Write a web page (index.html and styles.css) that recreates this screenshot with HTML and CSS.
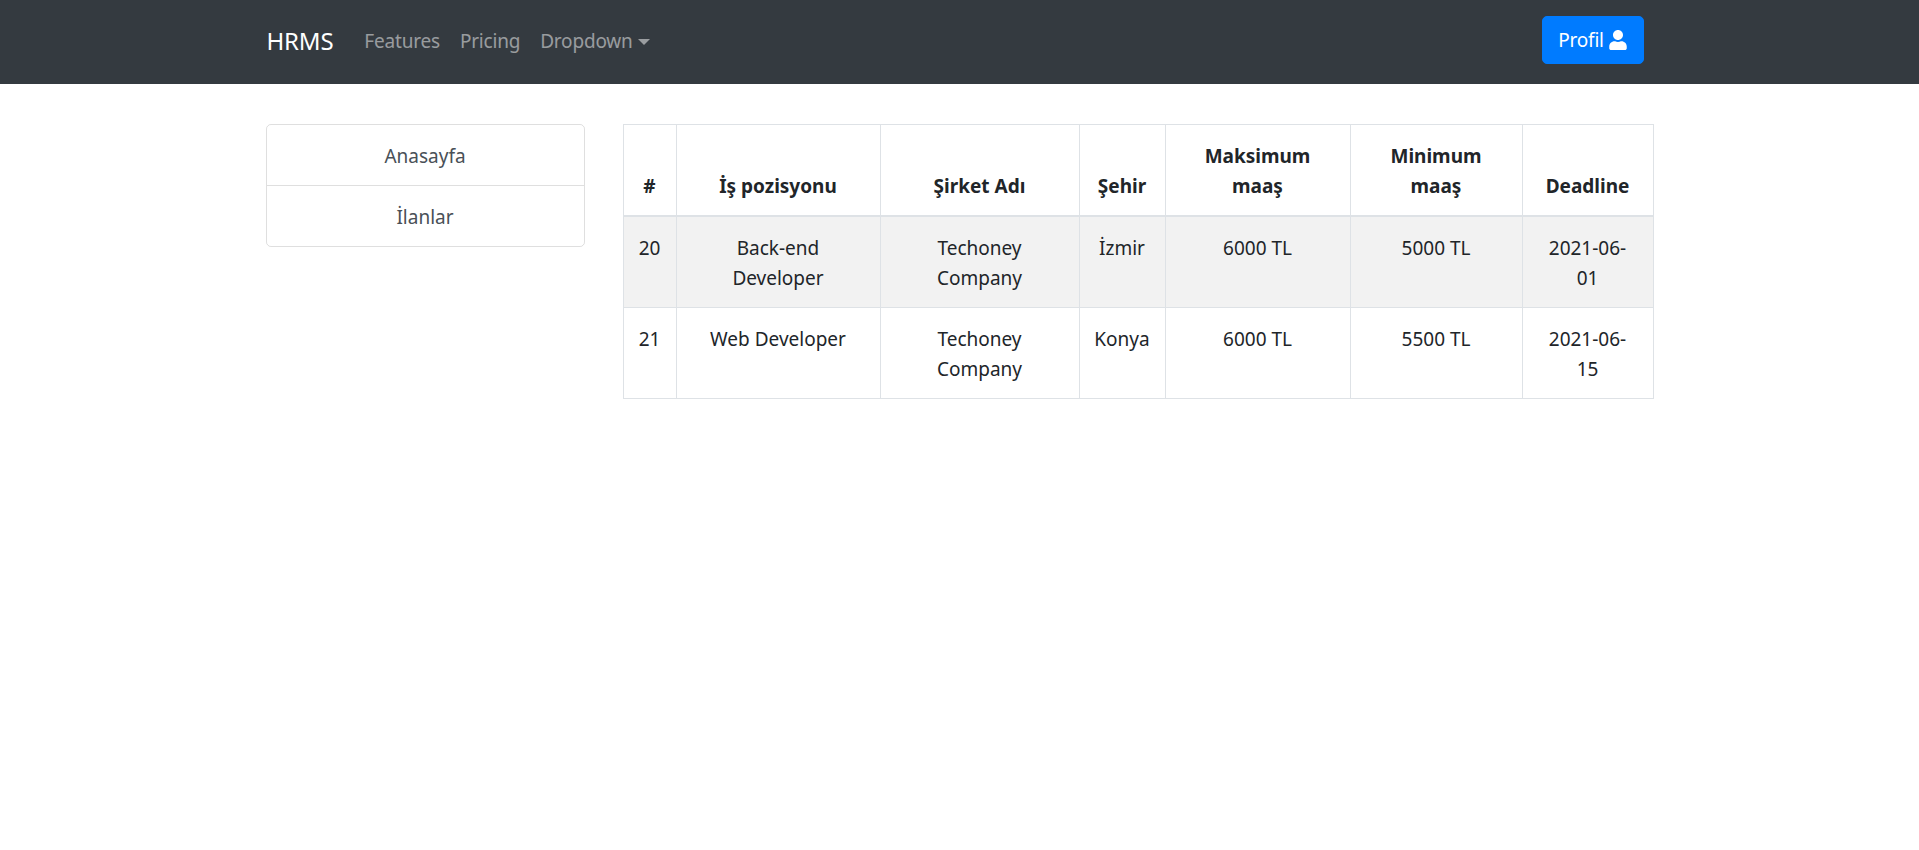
FILE: index.html
```html
<!DOCTYPE html>
<html lang="tr">
<head>
<meta charset="utf-8">
<title>HRMS</title>
<link rel="stylesheet" href="styles.css">
</head>
<body>
<nav class="navbar">
  <div class="nav-inner">
    <a class="brand" href="#">HRMS</a>
    <ul class="nav-links">
      <li><a class="nav-link" href="#">Features</a></li>
      <li><a class="nav-link" href="#">Pricing</a></li>
      <li><a class="nav-link" href="#">Dropdown<span class="caret"></span></a></li>
    </ul>
    <button class="profile-btn" type="button">Profil
      <svg class="user-icon" viewBox="0 0 448 512" aria-hidden="true"><path fill="currentColor" d="M224 256c70.7 0 128-57.3 128-128S294.7 0 224 0 96 57.3 96 128s57.3 128 128 128zm89.6 32h-16.7c-22.2 10.2-46.9 16-72.9 16s-50.6-5.8-72.9-16h-16.7C60.2 288 0 348.2 0 422.4V464c0 26.5 21.5 48 48 48h352c26.5 0 48-21.5 48-48v-41.6c0-74.2-60.2-134.4-134.4-134.4z"/></svg>
    </button>
  </div>
</nav>
<main class="content">
  <aside class="side-menu">
    <a class="side-item" href="#">Anasayfa</a>
    <a class="side-item" href="#">İlanlar</a>
  </aside>
  <table class="jobs">
    <colgroup>
      <col class="c-id"><col class="c-pos"><col class="c-co"><col class="c-city"><col class="c-max"><col class="c-min"><col class="c-date">
    </colgroup>
    <thead>
      <tr>
        <th>#</th><th>İş pozisyonu</th><th>Şirket Adı</th><th>Şehir</th><th>Maksimum<br>maaş</th><th>Minimum<br>maaş</th><th>Deadline</th>
      </tr>
    </thead>
    <tbody>
      <tr class="striped">
        <td>20</td><td>Back-end<br>Developer</td><td>Techoney<br>Company</td><td>İzmir</td><td>6000 TL</td><td>5000 TL</td><td>2021-06-<br>01</td>
      </tr>
      <tr>
        <td>21</td><td>Web Developer</td><td>Techoney<br>Company</td><td>Konya</td><td>6000 TL</td><td>5500 TL</td><td>2021-06-<br>15</td>
      </tr>
    </tbody>
  </table>
</main>
</body>
</html>
```
FILE: styles.css
```css
* { box-sizing: border-box; }
html, body { margin: 0; padding: 0; }
body {
  font-family: "Noto Sans", "Open Sans", sans-serif;
  font-size: 19px;
  line-height: 30px;
  color: #212529;
  background: #fff;
}
a { text-decoration: none; }

.navbar {
  background: #343a40;
  height: 84px;
  display: flex;
  justify-content: center;
}
.nav-inner {
  width: 1388px;
  padding-bottom: 2px;
  display: flex;
  align-items: center;
}
.brand {
  color: #fff;
  font-size: 24px;
  margin-left: 1px;
  margin-right: 21px;
  letter-spacing: -0.2px;
}
.nav-links {
  list-style: none;
  margin: 0;
  padding: 0;
  display: flex;
  flex: 1;
}
.nav-link {
  display: block;
  padding: 0 10px;
  color: rgba(255, 255, 255, .5);
  letter-spacing: -0.2px;
}
.caret {
  display: inline-block;
  margin-left: 5px;
  vertical-align: 3px;
  border-top: 6px solid currentColor;
  border-left: 6px solid transparent;
  border-right: 6px solid transparent;
}
.profile-btn {
  width: 102px;
  height: 48px;
  margin-right: 10px;
  margin-bottom: 2px;
  padding: 0;
  border: 1px solid #007bff;
  border-radius: 5px;
  background: #007bff;
  color: #fff;
  font: inherit;
  letter-spacing: -0.2px;
  display: flex;
  align-items: center;
  justify-content: center;
  gap: 5px;
}
.user-icon { width: 18px; height: 20px; }

.content {
  width: 1388px;
  margin: 40px auto 0;
  display: grid;
  grid-template-columns: 319px 1030px;
  column-gap: 38px;
  align-items: start;
}
.side-menu {
  border: 1px solid rgba(0, 0, 0, .125);
  border-radius: 5px;
}
.side-item {
  display: block;
  padding: 16px 0 14px;
  text-align: center;
  color: #495057;
}
.side-item + .side-item { border-top: 1px solid rgba(0, 0, 0, .125); }

.jobs {
  width: 1030px;
  table-layout: fixed;
  border-collapse: collapse;
  text-align: center;
}
.c-id { width: 53px; }
.c-pos { width: 204px; }
.c-co { width: 199px; }
.c-city { width: 86px; }
.c-max { width: 185px; }
.c-min { width: 172px; }
.c-date { width: 131px; }
.jobs th, .jobs td {
  border: 1px solid #dee2e6;
  padding: 16px 0 14px;
}
.jobs th {
  vertical-align: bottom;
  border-bottom-width: 2px;
  font-weight: 700;
}
.jobs td { vertical-align: top; }
.striped { background: #f2f2f2; }
```
